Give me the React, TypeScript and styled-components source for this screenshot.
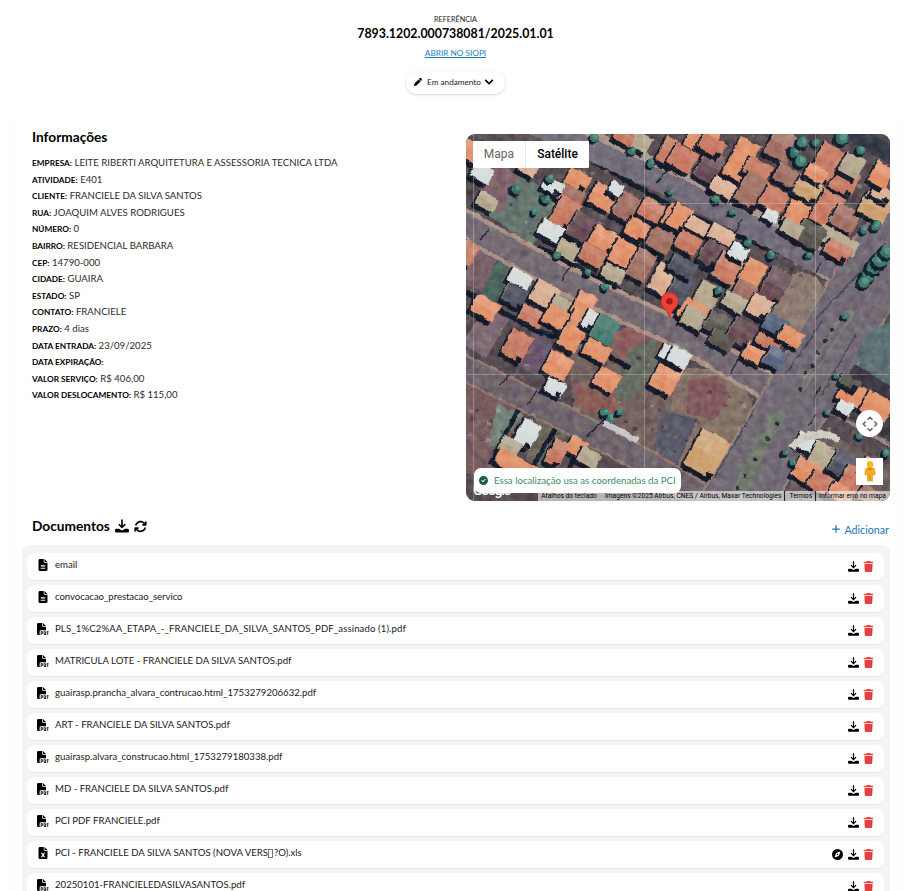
import React from 'react';
import styled, { createGlobalStyle } from 'styled-components';
import {
  FaArrowsRotate, FaCircleCheck, FaCompass, FaFileExcel,
  FaFileLines, FaFilePdf, FaPen, FaPlus, FaTrash,
} from 'react-icons/fa6';
import { FaChevronDown } from 'react-icons/fa';

const GlobalStyle = createGlobalStyle`
  * { box-sizing: border-box; }
  body { margin: 0; background: #fff; color: #000; font-family: Lato, sans-serif; overflow: hidden; }
`;

const Page = styled.div`
  width: 913px;
  height: 891px;
  overflow: hidden;
  background: #fff;
`;

const Header = styled.header`
  height: 121px;
  padding: 14px 2px 0 0;
  display: flex;
  flex-direction: column;
  align-items: center;
`;
const RefLabel = styled.span`
  font-size: 7.25px;
  line-height: 11px;
  color: #1a1a1a;
`;
const RefNumber = styled.strong`
  font-size: 12.35px;
  line-height: 18px;
`;
const SiopiLink = styled.a`
  margin-top: 4px;
  font-size: 8.25px;
  line-height: 12px;
  color: #1c7bbd;
  text-decoration: underline;
  text-underline-offset: 1px;
`;
const StatusButton = styled.button`
  margin-top: 12px;
  width: 99px;
  height: 23px;
  padding: 0 3px 1px 0;
  display: flex;
  align-items: center;
  justify-content: center;
  border: 0;
  border-radius: 12px;
  background: #fff;
  box-shadow: 0 1px 3px rgba(0, 0, 0, 0.16);
  font: 8.2px Lato, sans-serif;
  color: #222;
  svg { color: #000; }
`;
const StatusText = styled.span`
  margin: 0 3px 0 5px;
`;

const Card = styled.main`
  margin: 0 13px 0 12px;
  height: 800px;
  padding: 0 10px 0 9px;
  border: solid #fbfbfb;
  border-width: 0 1px;
`;
const Columns = styled.section`
  display: grid;
  grid-template-columns: 444px 424px;
  height: 380px;
`;
const Info = styled.div`
  padding: 7px 0 0 10px;
`;
const Title = styled.h2`
  margin: 0;
  font-size: 13.7px;
  line-height: 18px;
  font-weight: 700;
`;
const InfoList = styled.dl`
  margin: 9px 0 0;
`;
const InfoRow = styled.div`
  display: flex;
  align-items: baseline;
  gap: 2.5px;
  height: 16.6px;
  line-height: 16.6px;
`;
const Label = styled.dt`
  font-size: 8.25px;
  font-weight: 700;
  text-transform: uppercase;
`;
const Value = styled.dd`
  margin: 0;
  font-size: 9.6px;
  color: #2b2b2b;
`;

const MapFrame = styled.div`
  position: relative;
  margin-top: 13px;
  height: 367px;
  border-radius: 9px;
  overflow: hidden;
  background: #736a70;
`;
const MapArt = styled.svg`
  display: block;
  width: 424px;
  height: 367px;
`;
const MapTypes = styled.div`
  position: absolute;
  left: 7px;
  top: 7px;
  height: 27px;
  display: flex;
  background: #fff;
  border-radius: 1px;
`;
const MapType = styled.span<{ $active?: boolean }>`
  width: ${(p) => (p.$active ? 63 : 53)}px;
  text-align: center;
  font: ${(p) => (p.$active ? 500 : 400)} 12px/27px Roboto, sans-serif;
  color: ${(p) => (p.$active ? '#000' : '#666')};
  border-right: ${(p) => (p.$active ? 0 : 1)}px solid #e8e8e8;
`;
const Pin = styled.svg`
  position: absolute;
  left: 194px;
  top: 158px;
`;
const CameraButton = styled.div`
  position: absolute;
  right: 7px;
  top: 276px;
  width: 27px;
  height: 27px;
  border-radius: 50%;
  background: #fff;
  display: grid;
  place-items: center;
`;
const Pegman = styled.div`
  position: absolute;
  right: 7px;
  top: 324px;
  width: 27px;
  height: 27px;
  background: #fff;
  display: grid;
  place-items: center;
`;
const GoogleMark = styled.span`
  position: absolute;
  left: 7px;
  top: 346px;
  font: 500 14px/20px Roboto, sans-serif;
  letter-spacing: -1.3px;
  color: #fff;
`;
const Attribution = styled.div`
  position: absolute;
  right: 0;
  bottom: 0;
  height: 10px;
  padding-right: 4px;
  display: flex;
  background: rgba(245, 245, 245, 0.62);
  font: 6.7px/10px Roboto, sans-serif;
  color: #000;
  white-space: nowrap;
`;
const Credit = styled.span<{ $gap: number; $rule?: boolean }>`
  padding-left: ${(p) => p.$gap}px;
  margin-left: ${(p) => (p.$rule ? 3 : 0)}px;
  border-left: ${(p) => (p.$rule ? '1px solid #222' : '0')};
`;
const Notice = styled.div`
  position: absolute;
  left: 8px;
  top: 334px;
  width: 207px;
  height: 25px;
  padding: 0 0 1px 5px;
  display: flex;
  align-items: center;
  gap: 6px;
  border-radius: 7px;
  background: #fff;
  font-size: 9.66px;
  color: #418c69;
  white-space: nowrap;
  svg { color: #176143; flex: none; }
`;
const NoticeText = styled.span`
  margin-top: -1px;
`;

const DocsHeader = styled.div`
  height: 44px;
  padding: 0 0 0 10px;
  display: flex;
  align-items: center;
`;
const DocsTools = styled.div`
  margin-left: 5px;
  display: flex;
  align-items: center;
  gap: 5px;
  padding-top: 6px;
`;
const DocsTitle = styled(Title)`
  margin-top: 5px;
`;
const AddLink = styled.span`
  margin-left: auto;
  padding-top: 12px;
  display: flex;
  align-items: center;
  gap: 3px;
  font-size: 10.7px;
  line-height: 15px;
  color: #1d78b5;
`;
const DocsList = styled.section`
  width: 868px;
  padding: 8px 6px 0 5px;
  display: flex;
  flex-direction: column;
  gap: 5px;
  border-radius: 8px 8px 0 0;
  background: #f4f4f4;
`;
const DocRow = styled.div`
  height: 27px;
  flex: none;
  padding: 0 10px;
  display: flex;
  align-items: center;
  border-radius: 8px;
  background: #fff;
  box-shadow: 0 1px 1px rgba(0, 0, 0, 0.05);
`;
const FileIcon = styled.span`
  width: 18px;
  height: 13px;
  display: flex;
  align-items: center;
  margin-top: -4px;
`;
const FileName = styled.span<{ $tracking?: number }>`
  flex: 1;
  margin-top: -3px;
  font-size: 9.6px;
  line-height: 14px;
  letter-spacing: ${(p) => p.$tracking ?? 0}px;
  color: #1a1a1a;
`;
const Actions = styled.span`
  display: flex;
  align-items: center;
  gap: 4.5px;
`;
const MissingGlyph = styled.span`
  display: inline-block;
  width: 5px;
  height: 9px;
  margin: 0 0.5px;
  border: 1px solid #777;
  vertical-align: -2px;
`;

const DownloadIcon = ({ size }: { size: number }) => (
  <svg width={size} height={size} viewBox="0 0 12 12" fill="none">
    <path d="M6 .4v6.6M3.200 4.500 6 7.200l2.800-2.700" stroke="#000" strokeWidth="1.400" />
    <path d="M1.200 8.400h2.200L6 9.800 8.600 8.400h2.200q1.200 0 1.200 1.200v1q0 1-1 1H1q-1 0-1-1v-1q0-1.200 1.200-1.200z" fill="#000" />
  </svg>
);

const info: [string, string][] = [
  ['Empresa', 'LEITE RIBERTI ARQUITETURA E ASSESSORIA TECNICA LTDA'],
  ['Atividade', 'E401'],
  ['Cliente', 'FRANCIELE DA SILVA SANTOS'],
  ['Rua', 'JOAQUIM ALVES RODRIGUES'],
  ['Número', '0'],
  ['Bairro', 'RESIDENCIAL BARBARA'],
  ['CEP', '14790-000'],
  ['Cidade', 'GUAIRA'],
  ['Estado', 'SP'],
  ['Contato', 'FRANCIELE'],
  ['Prazo', '4 dias'],
  ['Data entrada', '23/09/2025'],
  ['Data expiração', ''],
  ['Valor serviço', 'R$ 406,00'],
  ['Valor deslocamento', 'R$ 115,00'],
];

type Doc = { kind: 'text' | 'pdf' | 'xls'; name: React.ReactNode; tracking?: number };
const docs: Doc[] = [
  { kind: 'text', name: 'email' },
  { kind: 'text', name: 'convocacao_prestacao_servico', tracking: -0.06 },
  { kind: 'pdf', name: 'PLS_1%C2%AA_ETAPA_-_FRANCIELE_DA_SILVA_SANTOS_PDF_assinado (1).pdf', tracking: 0.11 },
  { kind: 'pdf', name: 'MATRICULA LOTE - FRANCIELE DA SILVA SANTOS.pdf' },
  { kind: 'pdf', name: 'guairasp.prancha_alvara_contrucao.html_1753279206632.pdf' },
  { kind: 'pdf', name: 'ART - FRANCIELE DA SILVA SANTOS.pdf' },
  { kind: 'pdf', name: 'guairasp.alvara_construcao.html_1753279180338.pdf' },
  { kind: 'pdf', name: 'MD - FRANCIELE DA SILVA SANTOS.pdf' },
  { kind: 'pdf', name: 'PCI PDF FRANCIELE.pdf' },
  { kind: 'xls', name: <>PCI - FRANCIELE DA SILVA SANTOS (NOVA VERS<MissingGlyph />?O).xls</> },
  { kind: 'pdf', name: '20250101-FRANCIELEDASILVASANTOS.pdf' },
];
const fileIcons = { text: FaFileLines, pdf: FaFilePdf, xls: FaFileExcel };

/* Map palette */
const O = '#e09068', C = '#c67a62', B = '#a06f62', D = '#684c53', P = '#d9ae92';
const T = '#b3a68c', W = '#d5dcdb', G = '#59564f', Y = '#cb9f70', N = '#4f5260';

/* Roofs: centre x, centre y, width, height, colour */
type Roof = [number, number, number, number, string];
const roofs: Roof[] = [
  [4, 16, 22, 18, O], [112, 45, 22, 17, O], [105, 61, 24, 16, B], [137, 62, 24, 22, O], [162, 73, 23, 25, B], [99, 78, 21, 29, C],
  [86, 97, 26, 16, W], [104, 115, 25, 18, T], [116, 93, 23, 25, D], [138, 105, 26, 20, O],
  [127, 121, 25, 17, C], [157, 119, 22, 24, O], [177, 128, 20, 35, B], [172, 94, 23, 20, O],
  [195, 104, 24, 24, B], [186, 76, 24, 18, C], [206, 81, 14, 22, O], [199, 146, 25, 28, P],
  [147, 139, 21, 14, T], [150, 54, 12, 12, W], [174, 7, 20, 16, T], [203, 17, 17, 25, C], [158, 2, 18, 12, C], [16, 39, 20, 14, W],
  [21, 67, 20, 14, T], [87, 52, 20, 12, W], [62, 33, 18, 13, P], [2, 119, 14, 22, C], [54, 144, 22, 14, W],
  [50, 162, 24, 18, N], [19, 173, 25, 18, O], [79, 160, 25, 22, P], [97, 173, 24, 18, T],
  [118, 170, 18, 24, O], [236, 5, 28, 26, O], [217, 24, 25, 22, C], [246, 33, 25, 30, D],
  [246, 11, 25, 15, C], [275, 25, 21, 40, O], [257, 53, 24, 15, P], [292, 35, 25, 18, C],
  [286, 56, 25, 32, B], [316, 11, 26, 28, B], [324, 43, 30, 17, B], [308, 65, 24, 22, C],
  [342, 55, 26, 19, Y], [331, 80, 22, 25, O], [361, 27, 22, 33, C], [350, 39, 20, 13, O],
  [379, 47, 23, 23, C], [361, 74, 23, 33, C], [379, 84, 24, 22, B], [409, 73, 28, 22, Y],
  [416, 59, 20, 13, P], [415, 40, 18, 22, O], [386, 31, 20, 20, T], [372, 106, 40, 15, T],
  [372, 116, 25, 15, C], [345, 100, 25, 23, G], [326, 94, 20, 14, T], [305, 81, 13, 10, W],
  [214, 83, 18, 24, O], [233, 92, 24, 13, P], [256, 100, 25, 14, P], [222, 108, 23, 18, C],
  [246, 119, 20, 24, D], [262, 134, 24, 27, C], [287, 138, 20, 24, O], [281, 157, 25, 16, B],
  [309, 151, 22, 32, D], [241, 161, 21, 24, T], [227, 177, 26, 20, O], [269, 168, 24, 15, T],
  [294, 172, 21, 20, P], [213, 156, 18, 24, N], [273, 117, 17, 14, W], [217, 132, 26, 16, N],
  [51, 211, 22, 27, C], [66, 182, 24, 15, C], [91, 183, 24, 18, O], [109, 196, 20, 40, O],
  [125, 185, 13, 18, W], [139, 195, 22, 25, '#497b70'], [131, 216, 25, 16, O], [92, 231, 24, 23, O],
  [89, 253, 19, 14, W], [141, 245, 22, 19, O], [200, 243, 24, 28, O], [207, 221, 26, 14, W],
  [61, 299, 19, 25, W], [44, 312, 20, 15, T], [50, 330, 42, 15, O], [111, 312, 17, 16, O], [91, 318, 15, 26, C],
  [123, 323, 20, 15, T], [229, 184, 24, 18, T], [253, 190, 25, 20, G], [276, 198, 24, 24, D],
  [256, 206, 24, 14, G], [289, 219, 22, 17, O], [304, 204, 24, 18, C], [309, 190, 22, 16, '#56637c'],
  [309, 223, 18, 19, '#56637c'], [325, 202, 22, 15, O], [213, 223, 20, 15, W], [241, 319, 31, 40, Y],
  [386, 259, 25, 22, O], [411, 272, 28, 22, O], [379, 273, 15, 12, W], [384, 248, 20, 10, G],
  [342, 309, 22, 15, W], [358, 322, 25, 22, T], [341, 337, 25, 20, O], [357, 349, 27, 18, C],
  [378, 331, 25, 22, N], [389, 345, 25, 21, C], [377, 360, 27, 17, O], [405, 332, 17, 15, P], [404, 361, 22, 14, B],
];

/* Deterministic scatter of small details over the terrain */
const scatter = Array.from({ length: 900 }, (_, i) => {
  const a = Math.sin(i * 91.73 + 4) * 43758.5;
  const b = Math.sin(i * 37.19 + 9) * 24634.6;
  const c = Math.sin(i * 17.41 + 2) * 9631.3;
  return { x: (a - Math.floor(a)) * 424, y: (b - Math.floor(b)) * 367, s: 1 + (c - Math.floor(c)) * 4, k: i % 5 };
});
const speckle = ['#172029', '#c5b6a7', '#35564f', '#241c2b', '#a4776c'];

const trees: [number, number, number][] = [
  [129, 4, 6], [166, 17, 6], [185, 29, 6], [91, 121, 6], [122, 138, 5], [139, 153, 5], [205, 58, 5], [250, 65, 6], [267, 78, 5],
  [329, 17, 9], [337, 8, 9], [335, 27, 9], [350, 8, 6], [376, 4, 10], [395, 16, 7], [253, 156, 6], [282, 108, 6],
  [305, 121, 6], [343, 121, 6], [410, 92, 7], [398, 96, 6], [402, 142, 10], [408, 133, 11], [414, 126, 11], [421, 118, 10], [398, 148, 9],
  [145, 285, 8], [139, 278, 6], [153, 278, 5], [379, 182, 5], [371, 242, 4], [362, 278, 5], [394, 302, 5], [319, 319, 5], [420, 319, 5],
  [50, 55, 7], [80, 65, 7], [68, 78, 5], [84, 44, 6], [327, 329, 5],
];

const Satellite = () => (
  <MapArt viewBox="0 0 424 367">
    <defs>
      <filter id="grain" x="0" y="0" width="100%" height="100%" colorInterpolationFilters="sRGB">
        <feTurbulence type="fractalNoise" baseFrequency="0.13" numOctaves="4" seed="7" result="n" />
        <feDisplacementMap in="SourceGraphic" in2="n" scale="4" xChannelSelector="R" yChannelSelector="G" result="d" />
        <feGaussianBlur in="d" stdDeviation="0.35" result="s" />
        <feColorMatrix in="n" type="matrix" values=".55 0 0 0 .25  0 .55 0 0 .25  0 0 .55 0 .25  0 0 0 0 1" result="c" />
        <feColorMatrix in="c" type="saturate" values="0.25" result="g" />
        <feBlend in="g" in2="s" mode="soft-light" />
      </filter>
    </defs>
    <g filter="url(#grain)">
      <rect x="-5" y="-5" width="434" height="377" fill="#554b50" />
      {/* empty lots and fields */}
      <path d="M35 32 90 60 98 74 66 111 10 73z" fill="#64736c" />
      <path d="M30 31 53 42 36 77 10 73z" fill="#806069" />
      <path d="M6 107 33 119 17 158-4 148z" fill="#785e66" />
      <path d="M34 121 56 133 35 171 15 160z" fill="#49635d" />
      <path d="M19 174 43 185 20 224-4 210z" fill="#7b6670" />
      <path d="M68 195 92 211 70 243 49 228z" fill="#67546a" />
      <path d="M103 215 205 180 212 225 190 253 211 263 203 327 108 278z" fill="#72605c" />
      <path d="M145 200 180 185 178 228 157 238z" fill="#895a59" />
      <path d="M110 252 138 241 158 265 150 285 108 272z" fill="#895c56" />
      <path d="M166 213 190 205 187 248 154 271 145 250z" fill="#65695f" />
      <path d="M0 237 61 275 24 340 0 340z" fill="#765a5c" />
      <path d="M31 270 58 281 35 310 22 313z" fill="#718078" />
      <path d="M72 282 101 301 78 334 60 325z" fill="#68645b" />
      <path d="M209 235Q278 229 288 277L245 365H196z" fill="#827065" />
      <path d="M222 247 250 242 265 262 249 286 221 280z" fill="#80575a" />
      <path d="M196 276 231 285 207 341 188 314z" fill="#575866" />
      <path d="M326 139Q350 136 357 154L326 218 302 187z" fill="#8c7970" />
      <path d="M424 188Q397 190 386 232L430 260z" fill="#56696c" />
      {/* service alleys between lots */}
      <g stroke="#141b2b" strokeWidth="5" fill="none">
        <path d="M120 23 210 75 341 131 375 149" />
        <path d="M72 112 102 128 204 184 212 175" />
        <path d="M0 158 73 198 125 211 165 235M122 87 201 130" />
        <path d="M209 186 289 236 315 233M385 230 366 265 372 278 424 312" />
        <path d="M98 280 62 341M114 304 101 343M53 275 24 331" />
        <path d="M228 130 288 158M205 41 265 71M268 23 379 74" />
      </g>
      {/* terrain detail */}
      {scatter.map((p, i) => (
        <rect key={i} x={p.x} y={p.y} width={p.s} height={p.s * 0.8} fill={speckle[p.k]} opacity="0.4" />
      ))}
      {/* streets */}
      <g fill="none">
        <path d="M70-14 210 49 348 121 388 145" stroke="#a8968c" strokeWidth="30" />
        <path d="M-10 86 112 153 210 198 303 253" stroke="#a98e83" strokeWidth="31" />
        <path d="M-10 230 83 276 191 334 242 366" stroke="#91766e" strokeWidth="27" />
        <path d="M353 258 430 302" stroke="#948078" strokeWidth="26" />
        <path d="M71-8 210 54 348 126 395 144" stroke="#716a77" strokeWidth="22" />
        <path d="M-10 86 112 153 210 198 303 253" stroke="#726871" strokeWidth="22" />
        <path d="M-10 230 83 276 191 334 242 366" stroke="#6c6269" strokeWidth="22" />
        <path d="M257 389 338 255 416 124 450 81" stroke="#918079" strokeWidth="70" />
        <path d="M257 389 338 255 416 124 450 81" stroke="#706872" strokeWidth="65" />
        <path d="M341 251 430 302" stroke="#6d656d" strokeWidth="19" />
        <path d="M370-12Q400 7 432 25" stroke="#343747" strokeWidth="17" />
      </g>
      <path d="M260 367 301 288Q314 269 320 278 320 289 304 306L279 367z" fill="#6f776b" />
      <path d="M330 257 373 183Q382 171 387 176 389 184 379 194L337 258z" fill="#7b7c76" />
      <path d="M335 254 375 185 382 180 379 191 337 255z" fill="#706a72" />
      <path d="M424 190Q398 192 389 226L430 247z" fill="#5c6f73" />
      <path d="M321 367 332 313Q349 293 376 306L424 331V367z" fill="#6a5c5b" />
      <path d="M367 264 389 230 424 252V308L376 280z" fill="#3b3641" />
      {/* buildings with their shadows */}
      {roofs.map(([x, y, w, h, fill], i) => (
        <g key={i} transform={`translate(${x} ${y}) rotate(29)`}>
          <rect x={-w / 2 - 2} y={-h / 2 + 1} width={w + 1} height={h + 5} fill="#151a29" />
          <rect x={-w / 2} y={-h / 2} width={w + 1} height={h + 1} fill={fill} />
          <path d={`M${-w / 2} ${-h / 2}h${w}v${h / 2}h${-w}z`} fill="#fff" opacity={i % 3 ? 0.06 : 0.13} />
          <path d={`M${-w / 2} ${-h / 2}v${h}`} stroke="#e6c8b0" strokeWidth="0.8" opacity="0.55" />
          {i % 4 === 1 && <rect x={w / 2 - 6} y={h / 2 - 4} width="6" height="5" fill="#171a28" />}
        </g>
      ))}
      {trees.map(([x, y, r], i) => (
        <g key={i}>
          <circle cx={x - 2} cy={y + 2} r={r * 0.8} fill="#111f2d" />
          <circle cx={x} cy={y} r={r * 0.65} fill="#3d7568" />
          <circle cx={x + 1} cy={y - 1} r={r * 0.35} fill="#5a9280" />
        </g>
      ))}
      <path d="M138 289 173 307" stroke="#c6c4c8" strokeWidth="6" />
      <path d="M326 314Q344 291 374 306" fill="none" stroke="#d1cbc4" strokeWidth="7" />
      <g stroke="#20222e" strokeWidth="1.3" fill="none">
        <path d="M22 96 14 106M104 132 95 147M137 287 120 302M43 241 34 252M71 256 62 271M272 226 264 240M276 85 268 100M355 129 348 142M355 252 349 264M207 30 190 49M343 293 350 280" />
        <path d="M288 276 248 344M356 187 319 241M390 200 355 262M420 110 350 185" opacity="0.55" />
      </g>
      <g fill="#20312f">
        {[[334, 255], [340, 239], [346, 232], [352, 219], [359, 207], [366, 196], [311, 289], [302, 305], [289, 325], [279, 342], [272, 354]].map(([x, y]) => <circle key={x} cx={x} cy={y} r="2.2" />)}
      </g>
    </g>
    <g stroke="#e8e8e8" strokeWidth="0.7" opacity="0.42">
      <path d="M7.500 0V367M178.500 0V367M349.500 0V300M0 240.500H424M178 69.500H424" />
    </g>
  </MapArt>
);

export default function App() {
  return (
    <Page>
      <GlobalStyle />
      <Header>
        <RefLabel>REFERÊNCIA</RefLabel>
        <RefNumber>7893.1202.000738081/2025.01.01</RefNumber>
        <SiopiLink>ABRIR NO SIOPI</SiopiLink>
        <StatusButton>
          <FaPen size={8} />
          <StatusText>Em andamento</StatusText>
          <FaChevronDown size={10} />
        </StatusButton>
      </Header>
      <Card>
        <Columns>
          <Info>
            <Title>Informações</Title>
            <InfoList>
              {info.map(([label, value]) => (
                <InfoRow key={label}>
                  <Label>{label}:</Label>
                  <Value>{value}</Value>
                </InfoRow>
              ))}
            </InfoList>
          </Info>
          <MapFrame>
            <Satellite />
            <Pin width="19" height="27" viewBox="0 0 19 27">
              <path d="M9.500.5a8.700 8.700 0 0 0-8.700 8.700c0 3.500 1.700 5.600 4.100 8.100C7.500 20 8.300 22 8.700 24.400q.8 2.300 1.600 0c.4-2.400 1.200-4.400 3.800-7.100 2.400-2.500 4.100-4.600 4.100-8.100A8.700 8.700 0 0 0 9.500.5z" fill="#ea4335" stroke="#c5221f" strokeWidth=".6" />
              <circle cx="9.500" cy="9.300" r="3.300" fill="#a61b18" />
            </Pin>
            <MapTypes>
              <MapType>Mapa</MapType>
              <MapType $active>Satélite</MapType>
            </MapTypes>
            <CameraButton>
              <svg width="16" height="16" viewBox="0 0 16 16" fill="none" stroke="#666" strokeWidth="1.500">
                <path d="M5.500 3.700 8 1.200l2.500 2.500M5.500 12.300 8 14.800l2.500-2.500M3.700 5.500 1.200 8l2.500 2.500M12.300 5.500 14.800 8l-2.500 2.500" />
              </svg>
            </CameraButton>
            <Pegman>
              <svg width="14" height="21" viewBox="0 0 14 21">
                <circle cx="7" cy="3.600" r="3" fill="#fbbc04" stroke="#e39a18" strokeWidth=".6" />
                <path d="M3.800 7h6.400q1.500.4 1.600 2.200l.4 4.400-1.700.5-.7-2-.4 8H4.600l-.4-8-.7 2-1.700-.5.4-4.400Q2.300 7.400 3.800 7z" fill="#f5ad20" stroke="#df981a" strokeWidth=".6" />
                <path d="m4.500 7.200 2.500 2.300 2.500-2.300z" fill="#d96c27" />
                <path d="M7 13.500v6" stroke="#c87f15" strokeWidth=".8" />
              </svg>
            </Pegman>
            <GoogleMark>Google</GoogleMark>
            <Attribution>
              <Credit $gap={3}>Atalhos do teclado</Credit>
              <Credit $gap={8}>Imagens ©2025 Airbus, CNES / Airbus, Maxar Technologies</Credit>
              <Credit $gap={4} $rule>Termos</Credit>
              <Credit $gap={3} $rule>Informar erro no mapa</Credit>
            </Attribution>
            <Notice>
              <FaCircleCheck size={9} />
              <NoticeText>Essa localização usa as coordenadas da PCI</NoticeText>
            </Notice>
          </MapFrame>
        </Columns>
        <DocsHeader>
          <DocsTitle>Documentos</DocsTitle>
          <DocsTools>
            <DownloadIcon size={14} />
            <FaArrowsRotate size={13} />
          </DocsTools>
          <AddLink><FaPlus size={10} />Adicionar</AddLink>
        </DocsHeader>
        <DocsList>
          {docs.map(({ kind, name, tracking }, i) => {
            const Icon = fileIcons[kind];
            return (
              <DocRow key={i}>
                <FileIcon><Icon size={12} /></FileIcon>
                <FileName $tracking={tracking}>{name}</FileName>
                <Actions>
                  {kind === 'xls' && <FaCompass size={11} />}
                  <DownloadIcon size={11} />
                  <FaTrash size={11} color="#e53e3e" />
                </Actions>
              </DocRow>
            );
          })}
        </DocsList>
      </Card>
    </Page>
  );
}
